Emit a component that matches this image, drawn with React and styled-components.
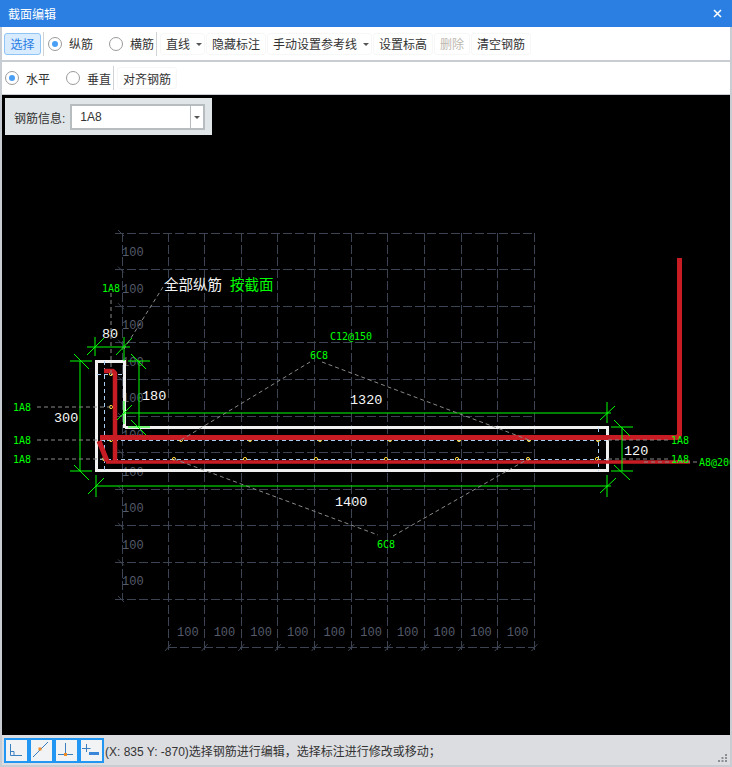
import React from 'react';
import styled, { createGlobalStyle } from 'styled-components';

const GlobalStyle = createGlobalStyle`
  html, body { margin: 0; padding: 0; background: #fff; }
  body { font-family: "Liberation Sans", "Noto Sans CJK SC", sans-serif; font-size: 12px; }
`;

// window chrome
const Win = styled.div`
  width: 732px;
  height: 767px;
  display: flex;
  flex-direction: column;
  background: #c8ccd3;
  overflow: hidden;
`;

const TitleBar = styled.div`
  height: 27px;
  flex: none;
  background: #2c7fe2;
  color: #fff;
  display: flex;
  align-items: center;
  justify-content: space-between;
  padding: 0 10px 0 8px;
`;

const Body = styled.div`
  flex: 1;
  display: flex;
  flex-direction: column;
  padding: 0 2px;
  min-height: 0;
`;

const Toolbar = styled.div`
  height: ${(p) => p.h}px;
  flex: none;
  margin-bottom: ${(p) => p.gap}px;
  background: #fff;
  display: flex;
  align-items: center;
  padding-left: ${(p) => p.pad}px;
`;

const Btn = styled.div`
  height: 22px;
  box-sizing: border-box;
  display: flex;
  align-items: center;
  gap: 6px;
  padding: 0 5px;
  margin-right: 1px;
  border: 1px solid #f7f7f7;
  border-radius: 3px;
  color: ${(p) => p.disabled ? '#bdb8b0' : '#333'};
  white-space: nowrap;
`;

const ActiveBtn = styled(Btn)`
  width: 37px;
  justify-content: center;
  margin: 0;
  background: #d8ebff;
  border-color: #8fc4f6;
  color: #2b7fe3;
`;

const Caret = styled.i`
  width: 0;
  height: 0;
  border-left: 3px solid transparent;
  border-right: 3px solid transparent;
  border-top: 3px solid #555;
  margin-top: 1px;
`;

const MenuCaret = styled(Caret)`
  margin-right: -3px;
`;

const Sep = styled.span`
  width: 1px;
  height: 24px;
  background: #d0d3d6;
  margin: ${(p) => p.m};
`;

const Radio = styled.span`
  width: 14px;
  height: 14px;
  box-sizing: border-box;
  border: 1px solid #9a9a9a;
  border-radius: 50%;
  display: flex;
  align-items: center;
  justify-content: center;
  flex: none;
  &::after {
    content: "";
    width: 6px;
    height: 6px;
    border-radius: 50%;
    background: ${(p) => p.on ? '#4a9ff5' : 'transparent'};
  }
`;

const RadioItem = styled.div`
  display: flex;
  align-items: center;
  gap: 7px;
  margin-left: ${(p) => p.left}px;
  color: #333;
  white-space: nowrap;
`;

// drawing area
const Canvas = styled.div`
  position: relative;
  height: 640px;
  flex: none;
  background: #000;
  overflow: hidden;
`;

const InfoPanel = styled.div`
  position: absolute;
  left: 3px;
  top: 3px;
  width: 207px;
  height: 37px;
  background: #e0e6e8;
  display: flex;
  align-items: center;
  gap: 5px;
  padding: 1px 0 0 9px;
  box-sizing: border-box;
  color: #333;
`;

const Select = styled.div`
  width: 135px;
  height: 26px;
  box-sizing: border-box;
  border: 2px solid #b7bdbf;
  background: #fff;
  display: flex;
  align-items: center;
  padding-left: 8px;
  justify-content: space-between;
`;

const SelectArrow = styled.div`
  width: 12px;
  height: 100%;
  border-left: 1px solid #b7bdbf;
  display: flex;
  align-items: center;
  justify-content: center;
`;

const Drawing = styled.svg`
  display: block;
  width: 100%;
  height: 100%;
`;

const GridNum = styled.text`
  font: 12px "Liberation Mono", monospace;
  fill: #555b6b;
`;

const DimNum = styled.text`
  font: 13.5px "Liberation Mono", monospace;
  fill: #f8f8f8;
`;

const Tag = styled.text`
  font: 10px "DejaVu Sans Mono", monospace;
  fill: #00ff00;
`;

const Note = styled.text`
  font: 14.5px "Noto Sans CJK SC", sans-serif;
  fill: ${(p) => p.fill};
`;

// status bar
const StatusBar = styled.div`
  height: 30px;
  flex: none;
  background: #dcdde1;
  display: flex;
  align-items: center;
  padding-left: 2px;
  color: #333;
  white-space: nowrap;
  position: relative;
`;

const SnapGroup = styled.div`
  display: flex;
  margin-right: 1px;
`;

const SnapBtn = styled.div`
  width: 25px;
  height: 25px;
  box-sizing: border-box;
  border: 2px solid #2196f3;
  background: #f2f3f5;
`;

const Grip = styled.svg`
  position: absolute;
  right: 2px;
  bottom: 3px;
`;

const gridXs = Array.from({ length: 11 }, (_, i) => 168 + i * 36.65);
const gridYs = Array.from({ length: 11 }, (_, i) => 233 + i * 36.6);
const sideNums = Array.from({ length: 10 }, (_, i) => 256 + i * 36.6);
const bottomNums = Array.from({ length: 10 }, (_, i) => 177 + i * 36.65);

const pointsTop = [111, 181, 250, 320, 390, 459, 529, 598];
const pointsBottom = [104, 174, 245, 316, 386, 457, 528, 597];

const greenLines = [
  // 80
  [87, 347, 130, 347], [95, 337, 95, 356], [87, 355, 104, 338], [124, 337, 124, 361], [116, 355, 132, 338],
  // 300
  [70, 361, 92, 361], [70, 471, 92, 471], [80, 361, 80, 471], [74, 354, 89, 369], [74, 465, 89, 480],
  // 180
  [128, 361, 150, 361], [128, 427, 150, 427], [139, 361, 139, 427], [131, 354, 146, 369], [131, 420, 146, 435],
  // 1320
  [124, 413, 611, 413], [124, 401, 124, 424], [117, 420, 132, 405], [607, 402, 607, 423], [600, 420, 615, 406],
  // 1400
  [96, 486, 611, 486], [96, 475, 96, 497], [88, 494, 104, 478], [607, 475, 607, 497], [600, 493, 616, 478],
  // 120
  [611, 427, 633, 427], [611, 471, 633, 471], [622, 427, 622, 471], [614, 420, 630, 436], [614, 465, 630, 480],
];

const leaders = [
  [37, 407, 111, 407], [37, 440, 100, 440], [37, 459, 104, 459],
  [111, 293, 111, 374], [163, 287, 124, 349],
  [181, 440, 310, 362], [322, 362, 529, 440],
  [174, 459, 378, 535], [393, 536, 528, 459],
  [608, 440, 668, 440], [608, 459, 668, 459], [644, 462, 698, 462],
];

const Line = ({ l, ...rest }) => <line x1={l[0]} y1={l[1]} x2={l[2]} y2={l[3]} {...rest} />;

function SectionDrawing() {
  return (
    <Drawing viewBox="2 95 728 640">
      {/* reference grid */}
      <g stroke="#3c4352" strokeDasharray="9 3" shapeRendering="crispEdges">
        {gridYs.map((y) => <line key={y} x1="115" y1={y} x2="535" y2={y} />)}
        {gridXs.map((x) => <line key={x} x1={x} y1="233" x2={x} y2="653" />)}
        <line x1="122" y1="233" x2="122" y2="599" />
        <line x1="168" y1="647" x2="534" y2="647" />
      </g>
      <g stroke="#3c4352">
        {gridYs.map((y) => <line key={y} x1="118" y1={y - 3} x2="124" y2={y + 3} />)}
        {gridXs.map((x) => <line key={x} x1={x - 3} y1="651" x2={x + 3} y2="644" />)}
      </g>
      {sideNums.map((y) => <GridNum key={y} x="122" y={y}>100</GridNum>)}
      {bottomNums.map((x) => <GridNum key={x} x={x} y="636">100</GridNum>)}

      {/* section outline */}
      <polyline
        points="124.5,427.5 124.5,361.5 96.5,361.5 96.5,470.5 607.5,470.5 607.5,427.5 124.5,427.5"
        fill="none" stroke="#f0f0f0" strokeWidth="3" shapeRendering="crispEdges"
      />
      <g stroke="#a9cdf0" strokeDasharray="4 3" shapeRendering="crispEdges">
        <line x1="104" y1="361" x2="104" y2="471" />
        <line x1="598" y1="428" x2="598" y2="471" />
        <line x1="97" y1="374" x2="124" y2="374" />
        <line x1="100" y1="440" x2="606" y2="440" />
        <line x1="100" y1="459" x2="606" y2="459" />
      </g>
      <g fill="none" stroke="#ffd83a">
        {pointsTop.map((x) => <circle key={x} cx={x} cy="440" r="1.6" />)}
        {pointsBottom.map((x) => <circle key={x} cx={x} cy="459" r="1.6" />)}
        <circle cx="111" cy="374" r="1.6" />
        <circle cx="111" cy="407" r="1.6" />
      </g>

      {/* rebars */}
      <g fill="none" stroke="#c81c24" strokeLinejoin="round">
        <polyline points="104,371 113,371 115,373 115,462" strokeWidth="4.5" />
        <polyline points="100,437.5 677,437.5 679.5,435 679.5,258" strokeWidth="5" />
        <polyline points="99,441 107,461" strokeWidth="5" />
        <line x1="106" y1="462" x2="690" y2="462" strokeWidth="3.5" />
      </g>

      {/* dimensions */}
      <g stroke="#00ff00">
        {greenLines.map((l, i) => <Line key={i} l={l} />)}
      </g>
      <g stroke="#8a8a8a" strokeDasharray="4 3">
        {leaders.map((l, i) => <Line key={i} l={l} />)}
      </g>

      <DimNum x="102" y="338">80</DimNum>
      <DimNum x="54" y="422">300</DimNum>
      <DimNum x="142" y="400">180</DimNum>
      <DimNum x="350" y="404">1320</DimNum>
      <DimNum x="335" y="506">1400</DimNum>
      <DimNum x="624" y="455">120</DimNum>

      <Tag x="102" y="292">1A8</Tag>
      <Tag x="13" y="411">1A8</Tag>
      <Tag x="13" y="444">1A8</Tag>
      <Tag x="13" y="463">1A8</Tag>
      <Tag x="671" y="444">1A8</Tag>
      <Tag x="671" y="463">1A8</Tag>
      <Tag x="699" y="466">A8@200</Tag>
      <Tag x="310" y="359">6C8</Tag>
      <Tag x="377" y="548">6C8</Tag>
      <Tag x="330" y="340">C12@150</Tag>

      <Note x="164" y="290" fill="#f4f4f4">全部纵筋</Note>
      <Note x="230" y="290" fill="#00ff00">按截面</Note>
    </Drawing>
  );
}

export default function App() {
  return (
    <Win>
      <GlobalStyle />
      <TitleBar>
        <span>截面编辑</span>
        <svg width="9" height="9" viewBox="0 0 9 9">
          <path d="M1 1L8 8M8 1L1 8" stroke="#fff" strokeWidth="1.5" fill="none" />
        </svg>
      </TitleBar>
      <Body>
        <Toolbar h={33} gap={2} pad={2}>
          <ActiveBtn>选择</ActiveBtn>
          <Sep m="0 4px 0 2px" />
          <RadioItem left={0}><Radio on />纵筋</RadioItem>
          <RadioItem left={16}><Radio />横筋</RadioItem>
          <Sep m="0 3px 0 2px" />
          <Btn>直线<MenuCaret /></Btn>
          <Btn>隐藏标注</Btn>
          <Btn>手动设置参考线<MenuCaret /></Btn>
          <Btn>设置标高</Btn>
          <Btn disabled>删除</Btn>
          <Btn>清空钢筋</Btn>
        </Toolbar>
        <Toolbar h={32} gap={1} pad={3}>
          <RadioItem left={0}><Radio on />水平</RadioItem>
          <RadioItem left={16}><Radio />垂直</RadioItem>
          <Sep m="0 3px 0 2px" />
          <Btn>对齐钢筋</Btn>
        </Toolbar>
        <Canvas>
          <SectionDrawing />
          <InfoPanel>
            钢筋信息:
            <Select>
              1A8
              <SelectArrow><Caret /></SelectArrow>
            </Select>
          </InfoPanel>
        </Canvas>
        <StatusBar>
          <SnapGroup>
            <SnapBtn>
              <svg width="21" height="21" viewBox="0 0 21 21" fill="none" stroke="#3a7fc0">
                <path d="M4.5 4V15.5H16M4.5 11.5H8V15.5" />
              </svg>
            </SnapBtn>
            <SnapBtn>
              <svg width="21" height="21" viewBox="0 0 21 21" fill="none">
                <path d="M2 17L17 2" stroke="#3a7fc0" />
                <rect x="7.5" y="7.5" width="3" height="3" fill="#f08a24" />
              </svg>
            </SnapBtn>
            <SnapBtn>
              <svg width="21" height="21" viewBox="0 0 21 21" fill="none">
                <path d="M9.5 3V14.5M2 14.5H17" stroke="#3a7fc0" />
                <rect x="8" y="13" width="3" height="3" fill="#f08a24" />
              </svg>
            </SnapBtn>
            <SnapBtn>
              <svg width="21" height="21" viewBox="0 0 21 21" fill="none">
                <path d="M5.5 4V12M1 8.5H9.5" stroke="#3a7fc0" />
                <rect x="8" y="12" width="10" height="3" fill="#3a86d8" />
              </svg>
            </SnapBtn>
          </SnapGroup>
          (X: 835 Y: -870)选择钢筋进行编辑，选择标注进行修改或移动；
          <Grip width="10" height="8" viewBox="0 0 10 8" fill="#8a8f96">
            <rect x="7" y="0" width="2" height="2" />
            <rect x="3.5" y="3" width="2" height="2" />
            <rect x="7" y="3" width="2" height="2" />
            <rect x="0" y="6" width="2" height="2" />
            <rect x="3.5" y="6" width="2" height="2" />
            <rect x="7" y="6" width="2" height="2" />
          </Grip>
        </StatusBar>
      </Body>
    </Win>
  );
}
